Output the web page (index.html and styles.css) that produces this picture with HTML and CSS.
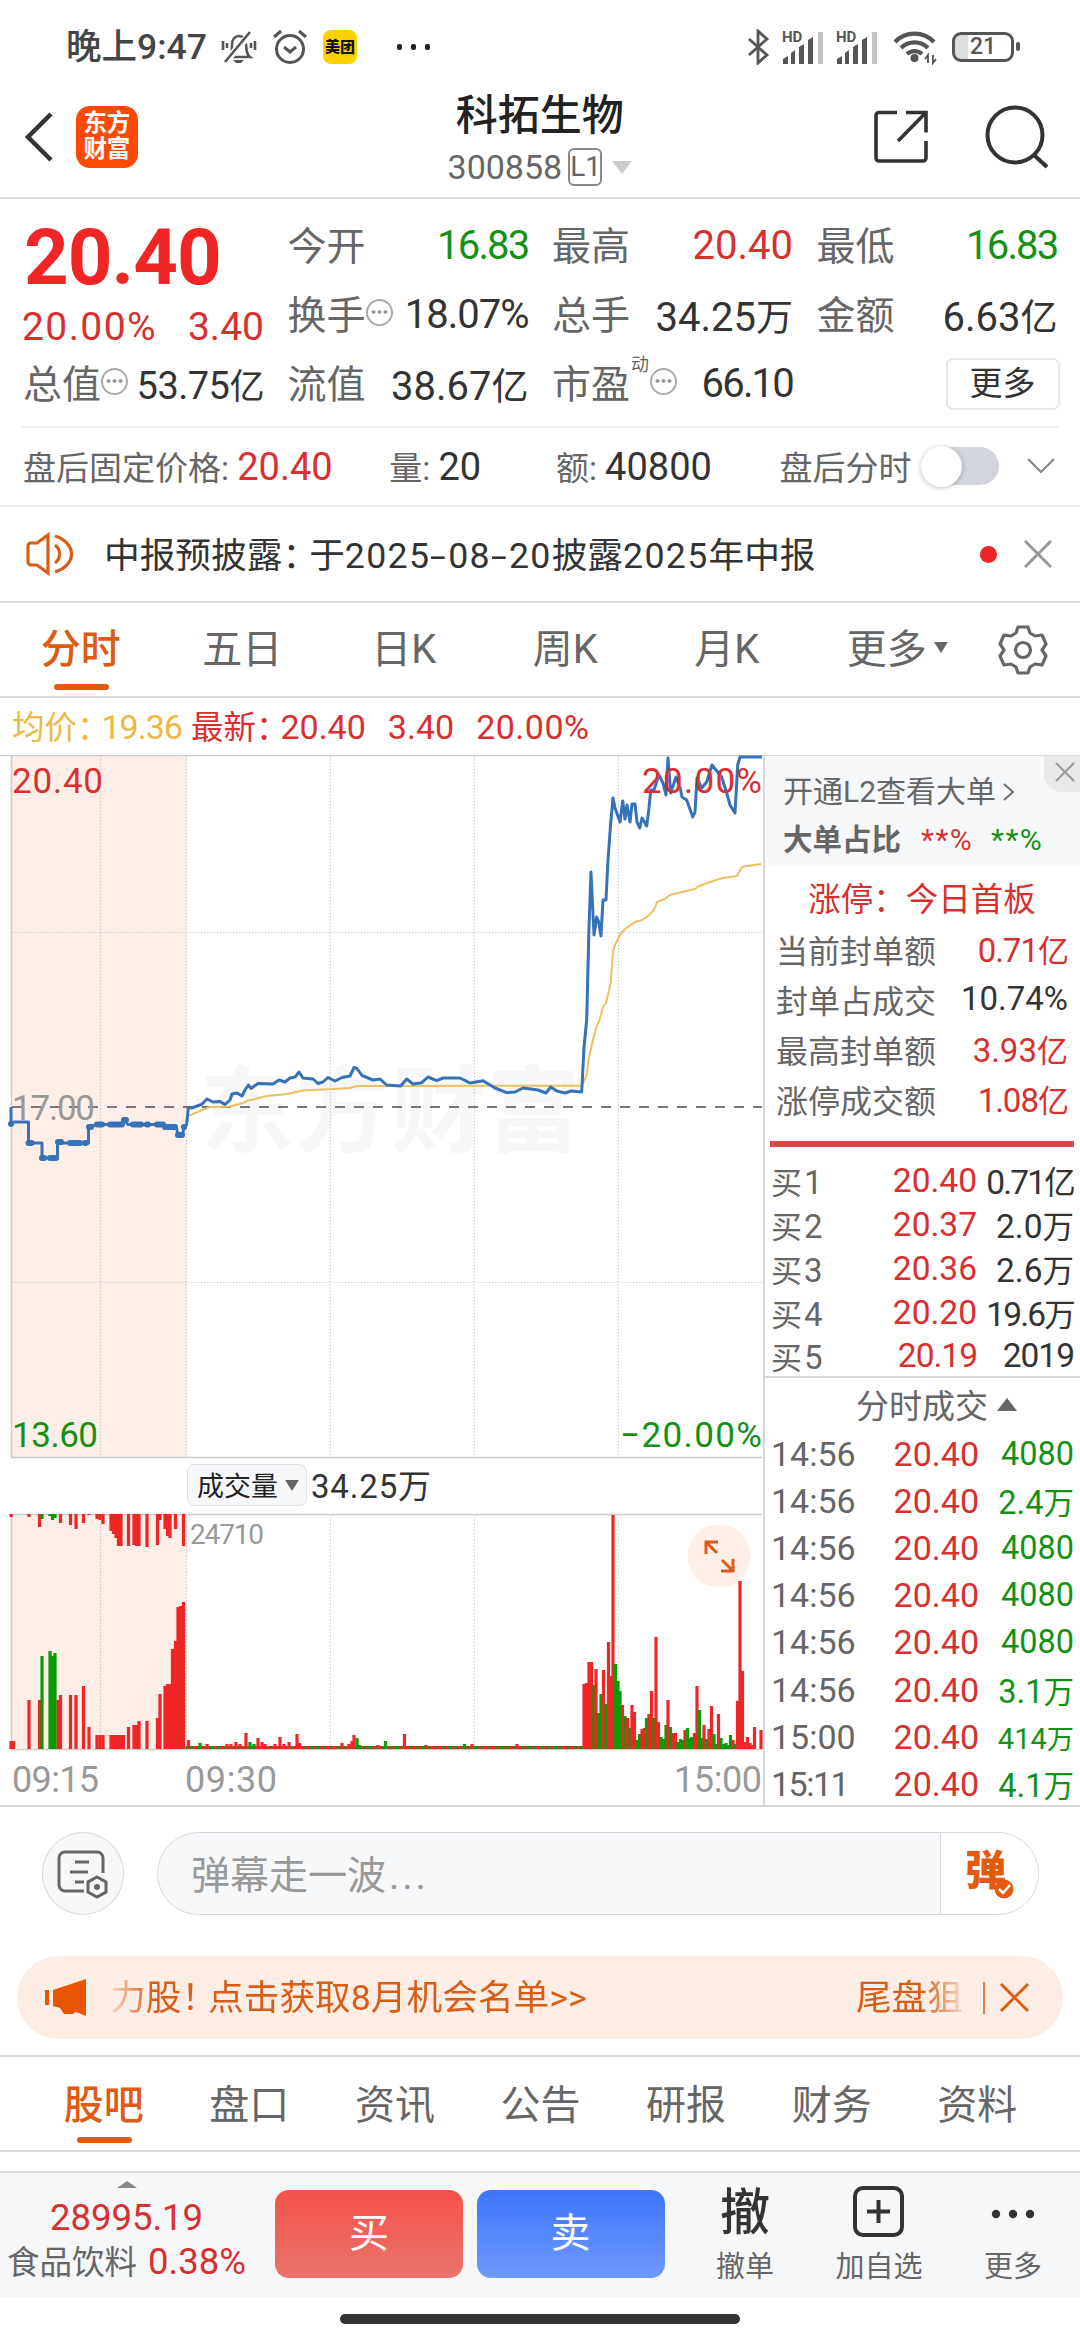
FILE: index.html
```html
<!DOCTYPE html>
<html lang="zh-CN">
<head>
    <meta charset="UTF-8">
    <meta name="viewport" content="width=device-width, initial-scale=1.0">
    <title>科拓生物 300858</title>
    <link rel="stylesheet" href="styles.css">
</head>
<body>
    <!-- Status bar -->
    <div class="status-bar">
        <span class="clock">晚上9:47</span>
        <svg class="bell" width="36" height="36" viewBox="0 0 36 36" fill="none" stroke="#555" stroke-width="2.6">
            <path d="M7 28h22c-4-3-3-6-4-12 0-6-3-9-7-9s-7 3-7 9c0 6 0 9-4 12z"/>
            <path d="M31 3L4 33" stroke="#fff" stroke-width="7"/>
            <path d="M29 3L4 33M2 12v9M34 12v9M6 14v5M30 14v5"/>
            <path d="M12 31h11l-3 3h-5z" fill="#555" stroke="none"/>
        </svg>
        <svg class="alarm" width="36" height="36" viewBox="0 0 36 36" fill="none" stroke="#555" stroke-width="3">
            <circle cx="18" cy="20" r="13.5"/>
            <path d="M12 18l6 5 6-5M2 8l7-6M34 8l-7-6"/>
        </svg>
        <span class="app-badge">美团</span>
        <span class="dots"><i></i><i></i><i></i></span>
        <div class="status-right">
            <svg width="24" height="36" viewBox="0 0 24 36" fill="none" stroke="#555" stroke-width="2.8">
                <path d="M3 10l18 16-9 8V2l9 8L3 26"/>
            </svg>
            <svg class="sim" width="42" height="36" viewBox="0 -2 42 36">
                <text x="0" y="11" class="hd">HD</text>
                <path d="M1 33v-5l5-3v8zM9 33V22l4-3v14zM17 33V16l5-3v20zM26 33V9l5-3v27z" fill="#555"/>
                <path d="M36 1h5v32h-5z" fill="#c4c4c4"/>
            </svg>
            <svg class="sim" width="42" height="36" viewBox="0 -2 42 36">
                <text x="0" y="11" class="hd">HD</text>
                <path d="M1 33v-5l5-3v8zM9 33V22l4-3v14zM17 33V16l5-3v20zM26 33V9l5-3v27z" fill="#555"/>
                <path d="M36 1h5v32h-5z" fill="#c4c4c4"/>
            </svg>
            <svg class="wifi" width="44" height="36" viewBox="0 0 44 36" fill="none" stroke="#555" stroke-width="4.2">
                <path d="M2 13a27 27 0 0 1 39 0M8 19a19 19 0 0 1 27 0M14 25a11 11 0 0 1 15 0"/>
                <circle cx="21.500" cy="29" r="4" fill="#555" stroke="none"/>
                <path d="M35 34v-8l-3 4M40 26v8l3-4" stroke-width="1.8"/>
            </svg>
            <span class="battery">21</span>
        </div>
    </div>

    <!-- Header -->
    <header class="header">
        <svg class="back" width="30" height="50" viewBox="0 0 30 50" fill="none" stroke="#333" stroke-width="4.500">
            <path d="M27 2L4 25l23 23"/>
        </svg>
        <div class="logo">东方<br>财富</div>
        <div class="title">
            <h1>科拓生物</h1>
            <div class="code">300858<span class="level">L1</span><i class="tri-down"></i></div>
        </div>
        <svg class="share" width="54" height="54" viewBox="0 0 54 54" fill="none" stroke="#333" stroke-width="3.600">
            <path d="M23 2.500H5a3 3 0 0 0-3 3V48a3 3 0 0 0 3 3h44a3 3 0 0 0 3-3V31M32 2.500h20v20M52 2.500L24 31"/>
        </svg>
        <svg class="search" width="64" height="64" viewBox="0 0 64 64" fill="none" stroke="#333" stroke-width="4">
            <circle cx="30" cy="30" r="27.500"/>
            <path d="M49 50l13 12"/>
        </svg>
    </header>

    <!-- Quote summary -->
    <section class="quote">
        <div class="quote-price">
            <div class="last">20.40</div>
            <div class="chg"><span class="wide">20.00%</span><span>3.40</span></div>
        </div>
        <div class="cell"><label>今开</label><b class="green tight">16.83</b></div>
        <div class="cell"><label>最高</label><b class="red">20.40</b></div>
        <div class="cell"><label>最低</label><b class="green tight">16.83</b></div>
        <div class="cell"><label>换手<i class="info"></i></label><b class="snug">18.07%</b></div>
        <div class="cell"><label>总手</label><b>34.25<em>万</em></b></div>
        <div class="cell"><label>金额</label><b>6.63<em>亿</em></b></div>
        <div class="cell small"><label>总值<i class="info"></i></label><b>53.75<em>亿</em></b></div>
        <div class="cell"><label>流值</label><b>38.67<em>亿</em></b></div>
        <div class="cell"><label>市盈<sup>动</sup><i class="info"></i></label><b class="tight">66.10</b></div>
        <div class="cell"><button class="more-btn">更多</button></div>
    </section>

    <!-- After-hours row -->
    <section class="after">
        <span class="a1">盘后固定价格: <b class="red">20.40</b></span>
        <span class="a2">量: <b>20</b></span>
        <span class="a3">额: <b>40800</b></span>
        <span class="a4">盘后分时</span>
        <span class="toggle"></span>
        <svg width="28" height="18" viewBox="0 0 28 18" fill="none" stroke="#888" stroke-width="2.200"><path d="M1 2l13 13L27 2"/></svg>
    </section>

    <!-- Notice -->
    <section class="notice">
        <svg width="50" height="44" viewBox="0 0 50 44" fill="none" stroke="#d95c17" stroke-width="3.200">
            <path d="M22 3v38L11 33H5a3 3 0 0 1-3-3V14a3 3 0 0 1 3-3h6zM29 13c6 4 6 14 0 18M29 4c22 7 22 29 0 36"/>
        </svg>
        <p>中报预披露<span class="colon">：</span>于<b>2025<i>-</i>08<i>-</i>20</b>披露<b>2025</b>年中报</p>
        <span class="red-dot"></span>
        <svg width="28" height="28" viewBox="0 0 28 28" stroke="#999" stroke-width="3"><path d="M1 1l26 26M27 1L1 27"/></svg>
    </section>

    <!-- Period tabs -->
    <nav class="periods">
        <a class="active">分时</a>
        <a>五日</a>
        <a>日K</a>
        <a>周K</a>
        <a>月K</a>
        <a class="more">更多<i></i></a>
        <svg width="50" height="50" viewBox="0 0 50 50" fill="none" stroke="#666" stroke-width="3.200" stroke-linejoin="round">
            <path d="M20 2h10l2 6 5 3 7-1 4 9-4 6 4 6-4 9-7-1-5 3-2 6H20l-2-6-5-3-7 1-4-9 4-6-4-6 4-9 7 1 5-3z"/>
            <circle cx="25" cy="25" r="7.500"/>
        </svg>
    </nav>

    <div class="legend">
        <span class="avg">均价：<b>19.36</b></span>
        <span class="red">最新：<b>20.40</b><b>3.40</b><b>20.00%</b></span>
    </div>

    <main class="board">
        <svg class="chart" id="chart" width="763" height="1051" viewBox="0 755 763 1051">
            <rect x="12" y="756" width="174.500" height="701" fill="#fdeee7"/>
            <rect x="12" y="1514" width="174.500" height="235" fill="#fdeee7"/>
            <text x="200" y="1145" class="watermark" textLength="380">东方财富</text>
            <g class="grid">
                <path d="M100.500 756V1457M186.500 756V1457M330.500 756V1457M474.500 756V1457M618.500 756V1457"/>
                <path d="M100.500 1514V1749M186.500 1514V1749M330.500 1514V1749M474.500 1514V1749M618.500 1514V1749"/>
                <path d="M12 932.500H762M12 1282.500H762"/>
            </g>
            <path class="frame" d="M0 755.500H763M11.500 755V1457.500H762M11.500 1749.500V1514.500M11 1514.500H762M11 1749.500H762"/>
            <path class="middle" d="M12 1107H762"/>
            <text x="12" y="793" class="label red" textLength="91">20.40</text>
            <text x="12" y="1120" class="label gray" textLength="83">17.00</text>
            <text x="12" y="1447" class="label green" textLength="86">13.60</text>
            <text x="620" y="1447" class="label green" textLength="142">−20.00%</text>
            <path class="avg-line" d="M189 1115.600L200 1111 210 1107 230 1106.500 243 1103 248 1100.600 267 1096 287 1094 303 1090.500 333 1089 350 1088 357 1086 380 1086 581.700 1085.700 586.700 1075 589 1057 593 1040 597 1025 599 1022 603 1007 606 1003 610.700 983 613 952 615 945 620 935 625 929 635 922 642 920 648 916 654 910 657 902 665 899 670 895 682 892 695 889 699 886 713 881 723 878 737 876 739 872 742 867 747 866 761 864"/>
            <path class="price-line pre" d="M11 1107V1124L14 1122H28.500V1143H42V1158H57.500V1142L60 1143H88.500V1127L97 1124.500H122L123.500 1119 128 1124.500H163L167 1127 176.500 1128 178 1135H182.500L184 1127 186.500 1125 188.500 1107"/>
            <path class="ticks" d="M11 1124h.1M28.500 1143h3M42 1158h2M50 1158h6M58 1142h3M70 1143h10M85 1143h1M89 1127h2M97 1124.500h5M110 1124.500h12M124 1120h2M133 1124.500h8M147 1124.500h1M157 1124.500h6M165 1127h10M178 1135h4M184 1127h.1"/>
            <path class="price-line" d="M188.500 1107L191.500 1108 201.500 1104.500 207 1099 213 1102 220 1101.500 225 1104.500 230 1100 232 1094 237 1093 242 1096 245 1090 248.500 1085 251 1088.500 258 1083.500 273 1084 279 1080 285 1082 290 1078 295 1077 299 1072 303 1078 313 1079 318 1083.500 323 1082 328 1077.500 335 1081 342 1077.500 350 1076 354 1067.500 357 1068.500 362 1075.500 373 1080 380 1079 386.700 1085 400.700 1086 406.700 1079 413 1084 421.700 1082.700 428 1077 436.700 1080.700 443 1078 460 1078 470 1083 483 1080.700 495 1088 506.700 1092.700 515 1092 523 1088 538 1090 546 1093 550.700 1087 556.700 1091 565 1093 571 1091 581.700 1092 584 1047 586.700 1020 589 927 591 872 594 935 596.700 917 598.700 922 601 936 603 900H606L608 860 610.700 823 613 798 615 808 620 822 622.700 801 625 819 627 805 630 822 632 804H635L637 822 639.700 828 642 818 646.700 826 649 808 650.700 790H654L659 775 663 783 666 795 668 758 670.700 793 676 777 680 787 682 797 686.700 800 692.700 817 695 812 697 778 701.700 788 706.700 782 712 765 716 770 721.700 777 726.700 793 730 805 735 813 737.700 765 740 757H762"/>
            <text x="642" y="793" class="label red" textLength="120">20.00%</text>

            <rect x="187.500" y="1464.500" width="119" height="41" rx="7" fill="#f7f8fa" stroke="#dfe1e4"/>
            <text x="197" y="1496" class="vol-name">成交量</text>
            <path d="M285 1480h14l-7 11z" fill="#666"/>
            <text x="311" y="1498" class="vol-value" textLength="120">34.25万</text>
            <g id="bars"></g>
            <text x="190" y="1544" class="vol-max" textLength="74">24710</text>
            <circle cx="719" cy="1556" r="31.500" fill="#fef0e8"/>
            <path d="M717 1553l-11-11m0 12v-12h12M722 1560l11 11m0-12v12h-12" fill="none" stroke="#dd5c14" stroke-width="3"/>
            <text x="12" y="1792" class="axis" textLength="87">09:15</text>
            <text x="185" y="1792" class="axis" textLength="92">09:30</text>
            <text x="674" y="1792" class="axis" textLength="88">15:00</text>
        </svg>

        <aside class="side">
            <div class="l2">
                <div>开通L2查看大单<svg width="12" height="18" viewBox="0 0 12 18" fill="none" stroke="#666" stroke-width="1.800"><path d="M1 1l9 8-9 8"/></svg></div>
                <div class="l2-rate"><strong>大单占比</strong><span class="red">**%</span><span class="green">**%</span></div>
                <span class="l2-close"><svg width="20" height="20" viewBox="0 0 20 20" stroke="#999" stroke-width="2"><path d="M1 1l18 18M19 1L1 19"/></svg></span>
            </div>
            <div class="limit">
                <h3>涨停：今日首板</h3>
                <div><span>当前封单额</span><b class="red snug">0.71<em>亿</em></b></div>
                <div><span>封单占成交</span><b>10.74%</b></div>
                <div><span>最高封单额</span><b class="red">3.93<em>亿</em></b></div>
                <div><span>涨停成交额</span><b class="red snug">1.08<em>亿</em></b></div>
            </div>
            <div class="ratio"></div>
            <div class="buys">
                <div><span>买<u>1</u></span><b class="red">20.40</b><b class="tight">0.71<em>亿</em></b></div>
                <div><span>买<u>2</u></span><b class="red">20.37</b><b>2.0<em>万</em></b></div>
                <div><span>买<u>3</u></span><b class="red">20.36</b><b>2.6<em>万</em></b></div>
                <div><span>买<u>4</u></span><b class="red">20.20</b><b class="tight">19.6<em>万</em></b></div>
                <div><span>买<u>5</u></span><b class="red snug">20.19</b><b class="snug">2019</b></div>
            </div>
            <div class="deals">
                <h4>分时成交<i></i></h4>
                <div><span>14:56</span><b class="red">20.40</b><b class="green">4080</b></div>
                <div><span>14:56</span><b class="red">20.40</b><b class="green">2.4<em>万</em></b></div>
                <div><span>14:56</span><b class="red">20.40</b><b class="green">4080</b></div>
                <div><span>14:56</span><b class="red">20.40</b><b class="green">4080</b></div>
                <div><span>14:56</span><b class="red">20.40</b><b class="green">4080</b></div>
                <div><span>14:56</span><b class="red">20.40</b><b class="green">3.1<em>万</em></b></div>
                <div><span>15:00</span><b class="red">20.40</b><b class="green tiny">414<em>万</em></b></div>
                <div><span class="narrow">15:11</span><b class="red">20.40</b><b class="green">4.1<em>万</em></b></div>
            </div>
        </aside>
    </main>

    <!-- Comment bar -->
    <section class="danmu">
        <div class="round">
            <svg width="52" height="50" viewBox="0 0 52 50" fill="none" stroke="#666" stroke-width="3">
                <path d="M27 41H8a6 6 0 0 1-6-6V8a6 6 0 0 1 6-6h32a6 6 0 0 1 6 6v15M18 12h14M13 22h18M18 32h9"/>
                <path d="M40 27l9 5v10l-9 5-9-5V32z"/>
                <circle cx="40" cy="37" r="3" fill="#666" stroke="none"/>
            </svg>
        </div>
        <div class="pill">
            <span>弹幕走一波<b>...</b></span>
            <div class="send">弹<svg width="20" height="20" viewBox="0 0 20 20"><circle cx="10" cy="10" r="9.500" fill="#e2590f"/><path d="M5 10l4 4 7-8" fill="none" stroke="#fff" stroke-width="2.500"/></svg></div>
        </div>
    </section>

    <!-- Promo ticker -->
    <section class="promo">
        <svg width="44" height="38" viewBox="0 0 44 38" fill="#ea5504">
            <path d="M1 11h4v15H1zM9 11L42 0v37l-10-4-1 0-2 2H20l-4-6-7-2z"/>
        </svg>
        <p class="ticker"><span>力股<i>！</i>点击获取8月机会名单&gt;&gt;</span><span>尾盘狙</span></p>
        <svg class="promo-close" width="46" height="34" viewBox="0 0 46 34" stroke="#dd5c14" fill="none"><path d="M1 1v32" stroke-width="1.500"/><path d="M18 3l27 27M45 3L18 30" stroke-width="3"/></svg>
    </section>

    <!-- Content tabs -->
    <nav class="sections">
        <a class="active">股吧</a>
        <a>盘口</a>
        <a>资讯</a>
        <a>公告</a>
        <a>研报</a>
        <a>财务</a>
        <a>资料</a>
    </nav>

    <!-- Trade bar -->
    <footer class="trade">
        <div class="sector">
            <i></i>
            <div class="index">28995.19</div>
            <div>食品饮料 <b>0.38%</b></div>
        </div>
        <button class="buy">买</button>
        <button class="sell">卖</button>
        <div class="action a-cancel"><strong>撤</strong>撤单</div>
        <div class="action a-add">
            <svg width="52" height="52" viewBox="0 0 52 52" fill="none" stroke="#333" stroke-width="4"><rect x="2" y="2" width="47" height="47" rx="8"/><path d="M25.500 14v23M14 25.500h23"/></svg>加自选
        </div>
        <div class="action a-more">
            <svg width="52" height="52" viewBox="0 0 52 52" fill="#333"><circle cx="9" cy="28" r="4.200"/><circle cx="26" cy="28" r="4.200"/><circle cx="43" cy="28" r="4.200"/></svg>更多
        </div>
    </footer>
    <div class="home"></div>

    <script>
        const RED = "#f02525";
        const GREEN = "#0a9b05";
        const BASE = 1749;
        const TOP = 1514;

        // [x, height] pairs of the opening auction
        const unmatched = {
            [RED]: [[11,3],[29,3],[39.5,13],[60.5,9],[70.5,11],[76,15],[83.5,9],[89,1],[97,5],[100,6],[103,10],[111,17],[113.5,20],[116,24],[118.5,32],[121,32],[128.5,32],[134,31],[136.5,32],[139,32],[147,33],[157.5,31],[160,6],[165,15],[167.5,22],[170,24],[175.5,15],[183.5,32]],
            [GREEN]: [[42,5],[50,2],[52.5,6],[55,4]]
        };
        const matched = {
            [RED]: [[11,8],[13.5,8],[29,49],[39.5,49],[58,49],[60.5,54],[70.5,54],[76,54],[83.5,63],[89,22],[97,14],[100,14],[103,14],[111,14],[113.5,14],[116,14],[118.5,14],[121,14],[123.5,14],[128.5,22],[134,24],[136.5,24],[139,28],[147,28],[157.5,31],[160,55],[165,63],[167.5,65],[170,65],[172.5,100],[175.5,108],[178,142],[180.5,143],[183.5,147]],
            [GREEN]: [[42,93],[50,98],[52.5,93],[55,96]]
        };

        // Regular session, r = up and g = down
        const session = "188.5r9 200g6 207r5 227r5 231r5 236r7 240r5 246r16 250g7 254g5 258r11 262r7 265r5 275r5 280r12 284r5 289r7 297r15 299.5r6 342r6 349r5 352r8 354r14 357g11 359.5g4 378r4 385.5g8 404.5r15 426r4 464.5g5 472r5 517r5 " +
            "584r65 586.5r66 589r87 591.5r87 594g64 596r80 598.5g36 601g55 603.5r79 606g45 608.5r107 610.5r73 613r234 615.5g85 618g68 620g58 622.5r44 625g33 627.5r31 630g21 632r44 634.5r37 637g9 639.5g15 642r20 644.5r21 646.5g31 649r35 651.5r58 654g31 656r112 658.5r27 661g12 663.5g10 666g24 668r49 670.5g22 673r16 675.5r16 678g7 680.5g10 683g9 685r19 687.5g21 690g11 692g12 694.5r16 697r63 699.5g39 702g11 704r24 706.5g10 709r20 711.5r43 714g15 716g5 718.5r35 721g11 723.5g5 726g6 728g4 730.5g14 733r9 735.5g5 737.5r48 740r168 742.5r78 745r7 747.5r12 750r6 752r4 754.5r22 761r19";

        const bars = document.getElementById("bars");

        function bar(x, y, h, color) {
            const rect = document.createElementNS("http://www.w3.org/2000/svg", "rect");
            rect.setAttribute("x", x - 1.6);
            rect.setAttribute("y", y);
            rect.setAttribute("width", 3.2);
            rect.setAttribute("height", h);
            rect.setAttribute("fill", color);
            bars.appendChild(rect);
        }

        for (const color of [RED, GREEN]) {
            unmatched[color].forEach(([x, h]) => bar(x, TOP, h, color));
            matched[color].forEach(([x, h]) => bar(x, BASE - h, h, color));
        }

        // Quiet minutes only leave a thin strip on the axis
        for (let i = 0, x = 187; x < 583; i++, x += 2.4) {
            bar(x, BASE - 3, 3, (i * 7) % 11 < 5 ? GREEN : RED);
        }

        session.split(" ").forEach(item => {
            const [, x, dir, h] = item.match(/^([\d.]+)([rg])(\d+)$/);
            bar(+x, BASE - h, +h, dir === "r" ? RED : GREEN);
        });
    </script>
</body>
</html>
```

FILE: styles.css
```css
* {
    box-sizing: border-box;
}

body {
    margin: 0;
    width: 1080px;
    height: 2340px;
    background: #fff;
    color: #333;
    font-family: Roboto, "Noto Sans CJK SC", sans-serif;
    display: flex;
    flex-direction: column;
    overflow: hidden;
}

b, i, em {
    font-weight: 400;
    font-style: normal;
}

u {
    text-decoration: none;
}

h1, h3, h4, p {
    margin: 0;
    font-weight: 400;
}

svg {
    display: block;
    flex: none;
}

button {
    font-family: inherit;
    padding: 0;
}

.red { color: #d8302f; }
.green { color: #149114; }

.tight { letter-spacing: -1.8px; }
.snug { letter-spacing: -1px; }

/* Status bar */
.status-bar {
    height: 76px;
    padding: 18px 60px 0 66px;
    display: flex;
    align-items: center;
}

.clock {
    width: 155px;
    font-size: 35.5px;
    font-weight: 500;
    line-height: 40px;
    color: #444;
    white-space: nowrap;
}

.alarm { margin-left: 15px; }

.app-badge {
    width: 34px;
    height: 34px;
    margin-left: 15px;
    border-radius: 8px;
    background: #fed100;
    color: #111;
    font-size: 15px;
    font-weight: 900;
    line-height: 34px;
    text-align: center;
}

.dots {
    margin-left: 40px;
    display: flex;
    gap: 9px;
}

.dots i {
    width: 5px;
    height: 6px;
    border-radius: 2px;
    background: #222;
}

.status-right {
    margin-left: auto;
    display: flex;
    align-items: center;
}

.sim {
    margin-left: 12px;
    overflow: visible;
}

.wifi { margin: 0 15px 0 15px; }

.hd {
    font-size: 15px;
    font-weight: 700;
    fill: #555;
}

.battery {
    position: relative;
    width: 62px;
    height: 30px;
    margin-right: 6px;
    border: 3.5px solid #555;
    border-radius: 9px;
    background: linear-gradient(90deg, #ddd 13px, #fff 13px);
    font-size: 23px;
    font-weight: 500;
    line-height: 24px;
    text-align: center;
    color: #555;
}

.battery::after {
    content: "";
    position: absolute;
    right: -9px;
    top: 7px;
    width: 4px;
    height: 9px;
    border-radius: 2px;
    background: #555;
}

/* Header */
.header {
    height: 123px;
    padding: 0 31px 0 24px;
    border-bottom: 2px solid #ddd;
    display: flex;
    align-items: center;
}

.logo {
    width: 62px;
    height: 62px;
    margin-left: 22px;
    border-radius: 14px;
    background: #fc4a05;
    color: #fff;
    font-size: 23.5px;
    font-weight: 700;
    line-height: 26px;
    padding-top: 4px;
    text-align: center;
}

.title {
    width: 739px;
    padding: 6px 0 0 68px;
    text-align: center;
}

.title h1 {
    font-size: 42px;
    font-weight: 500;
    line-height: 50px;
    padding-top: 5px;
    color: #222;
}

.code {
    height: 52px;
    display: flex;
    align-items: center;
    justify-content: center;
    font-size: 34px;
    color: #666;
}

.level {
    width: 34px;
    height: 38px;
    margin: 0 10px 0 6px;
    border: 2px solid #888;
    border-radius: 6px;
    font-size: 28px;
    line-height: 34px;
}

.tri-down {
    border: 10px solid transparent;
    border-top: 13px solid #ccc;
    border-bottom: 0;
}

.search { margin-left: 57px; }

/* Quote summary */
.quote {
    height: 229px;
    margin: 0 22px;
    padding: 12px 0 0 2px;
    border-bottom: 2px solid #eee;
    display: grid;
    grid-template-columns: repeat(4, 240px);
    grid-template-rows: repeat(3, 69px);
    column-gap: 24.5px;
}

.quote-price {
    grid-row: span 2;
}

.last {
    color: #f02525;
    font-size: 78px;
    font-weight: 700;
    line-height: 88px;
    letter-spacing: -1px;
    padding-top: 3px;
}

.chg {
    display: flex;
    justify-content: space-between;
    color: #d8302f;
    font-size: 39px;
    line-height: 50px;
}

.chg .wide {
    margin-left: -2px;
    letter-spacing: 1.4px;
}

.cell {
    display: flex;
    justify-content: space-between;
    align-items: center;
    white-space: nowrap;
}

.cell label {
    position: relative;
    display: flex;
    align-items: center;
    margin-top: -5px;
    margin-left: -1px;
    font-size: 39px;
    color: #666;
}

.cell b {
    font-size: 40px;
}

.cell b em {
    font-size: 37px;
}

.small b {
    font-size: 38px;
    letter-spacing: -.5px;
}

.small b em {
    font-size: 35px;
}

.info {
    width: 27px;
    height: 27px;
    border: 2px solid #aaa;
    border-radius: 50%;
    background: radial-gradient(circle, #999 1.7px, transparent 2px) 50% 50% / 6px 6px repeat-x;
    background-clip: content-box;
    padding: 0 2px;
}

.cell sup {
    align-self: flex-start;
    width: 20px;
    margin-top: 2px;
    font-size: 18px;
    line-height: 20px;
    padding-left: 1px;
}

.more-btn {
    width: 114px;
    height: 52px;
    margin-left: auto;
    margin-right: -2px;
    border: 2px solid #e6e6e6;
    border-radius: 7px;
    background: #fff;
    color: #333;
    font-size: 33px;
    line-height: 46px;
}

/* After-hours row */
.after {
    height: 79px;
    padding: 0 25px 2px 23px;
    border-bottom: 2px solid #eee;
    display: flex;
    align-items: center;
    font-size: 33px;
    color: #666;
    white-space: nowrap;
}

.after b {
    font-size: 38px;
}

.after b:not(.red) {
    color: #333;
}

.a1 { width: 367px; }
.a2 { width: 167px; }
.a3 { width: 224px; }
.a4 { width: 142px; }

.toggle {
    width: 78px;
    height: 38px;
    margin-right: 28px;
    border-radius: 19px;
    background: #d2d5db;
}

.toggle::before {
    content: "";
    display: block;
    width: 41px;
    height: 41px;
    margin-top: -1px;
    border-radius: 50%;
    background: #fff;
    box-shadow: 0 1px 5px rgba(0, 0, 0, .25);
}

/* Notice */
.notice {
    height: 96px;
    padding: 0 28px 0 26px;
    border-bottom: 2px solid #ddd;
    display: flex;
    align-items: center;
}

.notice p {
    margin-left: 28px;
    padding-bottom: 3px;
    font-size: 35.7px;
    white-space: nowrap;
}

.notice p b {
    letter-spacing: 1.3px;
}

.colon {
    margin-right: -9px;
}

.notice p i {
    display: inline-block;
    width: 18px;
    text-align: center;
    transform: scaleX(1.6);
}

.red-dot {
    width: 17px;
    height: 17px;
    margin-left: auto;
    margin-right: 27px;
    border-radius: 50%;
    background: #f02525;
}

/* Period tabs */
.periods {
    height: 95px;
    padding: 0 32px 0 0;
    border-bottom: 2px solid #ddd;
    display: flex;
    align-items: center;
}

.periods a {
    position: relative;
    width: 161.5px;
    text-align: center;
    font-size: 40px;
    line-height: 94px;
    color: #666;
}

.periods .more {
    padding-left: 18px;
    white-space: nowrap;
}

.periods a i {
    display: inline-block;
    margin: 0 0 10px 7px;
    border: 7px solid transparent;
    border-top: 11px solid #666;
    border-bottom: 0;
}

.periods svg {
    margin-left: auto;
}

.periods .active,
.sections .active {
    color: #de5b12;
    font-weight: 500;
}

.active::after {
    content: "";
    position: absolute;
    left: 50%;
    bottom: 7px;
    width: 55px;
    height: 6px;
    margin-left: -27px;
    border-radius: 3px;
    background: #e2590f;
}

.legend {
    height: 57px;
    padding: 2px 12px 0;
    display: flex;
    align-items: center;
    gap: 9px;
    font-size: 32.5px;
    line-height: 54px;
    white-space: nowrap;
}

.legend b {
    font-size: 34px;
    margin-left: -8px;
}

.legend b + b {
    margin-left: 22px;
}

.legend b:last-child {
    letter-spacing: .5px;
}

.legend .avg b {
    letter-spacing: -1px;
}

.avg { color: #edb844; }

/* Chart */
.board {
    height: 1052px;
    border-bottom: 2px solid #d5d8dc;
    display: flex;
}

.chart text {
    font-family: Roboto, "Noto Sans CJK SC", sans-serif;
}

.grid path {
    stroke: #c4c4c4;
    stroke-width: 1.2;
    stroke-dasharray: 1.2 2;
}

.frame {
    fill: none;
    stroke: #ccc;
    stroke-width: 1.5;
}

.middle {
    stroke: #777;
    stroke-width: 1.8;
    stroke-dasharray: 10 9;
}

.watermark {
    font-size: 94px;
    font-weight: 700;
    fill: #f7f7f7;
}

.price-line {
    fill: none;
    stroke: #3672b8;
    stroke-width: 3;
    stroke-linejoin: round;
}

.ticks {
    stroke: #3672b8;
    stroke-width: 6;
    stroke-linecap: round;
}

.avg-line {
    fill: none;
    stroke: #ebc061;
    stroke-width: 2;
    stroke-linejoin: round;
}

.label { font-size: 35px; }
.label.red { fill: #d8302f; }
.label.green { fill: #149114; }
.label.gray { fill: #999; }

.vol-name {
    font-size: 27px;
    fill: #222;
}

.vol-value {
    font-size: 33px;
    fill: #333;
}

.vol-max {
    font-size: 28px;
    fill: #999;
}

.axis {
    font-size: 36px;
    fill: #999;
}

/* Side panel */
.side {
    width: 317px;
    border-left: 2px solid #d5d8dc;
    border-top: 1px solid #ddd;
}

.side em {
    font-size: .94em;
}

.l2 {
    position: relative;
    height: 110px;
    padding: 12px 0 0 18px;
    background: #f7f8fa;
    color: #666;
    font-size: 30px;
    line-height: 48px;
}

.l2 > div {
    display: flex;
    align-items: center;
    white-space: nowrap;
}

.l2 > div svg {
    margin-left: 7px;
}

.l2-rate strong {
    font-size: 29.5px;
    width: 138px;
}

.l2-rate span {
    width: 70px;
    font-size: 30px;
    letter-spacing: 1.5px;
}

.l2-close {
    position: absolute;
    top: 0;
    right: 0;
    width: 36px;
    height: 36px;
    padding: 6px 0 0 11px;
    border-bottom-left-radius: 18px;
    background: #e8e9eb;
}

.limit {
    padding: 9px 12px 0 11px;
    height: 275px;
    font-size: 32px;
}

.limit h3 {
    font-size: 32.5px;
    line-height: 50px;
    text-align: center;
    color: #d8302f;
    white-space: nowrap;
}

.limit div {
    height: 50px;
    padding-bottom: 3px;
    display: flex;
    justify-content: space-between;
    align-items: center;
    white-space: nowrap;
}

.limit span {
    color: #666;
}

.limit b {
    font-size: 33px;
}

.ratio {
    height: 6px;
    margin: 0 6px 0 5px;
    background: #d9494a;
}

.buys {
    height: 231px;
    padding: 10px 6px 0 6px;
    border-bottom: 2px solid #d5d8dc;
}

.buys div,
.deals div {
    height: 44px;
    display: grid;
    grid-template-columns: 90px 116px 1fr;
    align-items: center;
    font-size: 33.5px;
    white-space: nowrap;
}

.buys span,
.deals span {
    color: #666;
}

.buys span {
    font-size: 31px;
}

.buys u {
    font-size: 33px;
    margin-left: 2px;
}

.buys b,
.deals b {
    text-align: right;
}

.deals {
    padding: 0 6px 0 6px;
}

.deals h4 {
    height: 52px;
    display: flex;
    align-items: center;
    justify-content: center;
    font-size: 33px;
    color: #666;
    padding-left: 28px;
}

.deals h4 i {
    margin-left: 9px;
    border: 10px solid transparent;
    border-bottom: 13px solid #666;
    border-top: 0;
}

.deals div {
    height: 47.2px;
    grid-template-columns: 90px 118px 1fr;
    font-size: 34px;
}

.deals .green {
    font-size: 32.5px;
}

.deals .green.tiny {
    font-size: 29px;
}

.deals .narrow {
    letter-spacing: -1.5px;
}

/* Comment bar */
.danmu {
    height: 132px;
    padding: 0 41px 0 42px;
    display: flex;
    align-items: center;
}

.round {
    width: 82px;
    height: 83px;
    border: 1.5px solid #d5d7db;
    border-radius: 50%;
    background: #f7f8fa;
    display: flex;
    align-items: center;
    justify-content: center;
    padding-top: 4px;
}

.pill {
    flex: 1;
    height: 83px;
    margin-left: 33px;
    border: 1.5px solid #d5d7db;
    border-radius: 42px;
    background: #f7f8fa;
    display: flex;
    align-items: center;
    overflow: hidden;
}

.pill span {
    flex: 1;
    padding: 0 0 2px 33px;
    font-size: 39px;
    color: #999;
}

.pill b {
    margin-left: 3px;
    letter-spacing: 3px;
}

.send {
    position: relative;
    width: 98px;
    height: 100%;
    padding-left: 24px;
    border-left: 1.5px solid #d5d7db;
    background: #fff;
    color: #e2590f;
    font-size: 41px;
    font-weight: 900;
    line-height: 76px;
}

.send svg {
    position: absolute;
    left: 53px;
    top: 46px;
    border-radius: 50%;
}

/* Promo ticker */
.promo {
    height: 83px;
    margin: 17px 17px 16px 17px;
    padding: 0 34px 0 27px;
    border-radius: 42px;
    background: #fceee5;
    display: flex;
    align-items: center;
}

.ticker {
    flex: 1;
    margin: 0 12px 0 15px;
    padding: 0 8px 0 7px;
    display: flex;
    justify-content: space-between;
    font-size: 35.7px;
    line-height: 50px;
    color: #d95c17;
    white-space: nowrap;
    -webkit-mask-image: linear-gradient(90deg, transparent, #000 50px, #000 calc(100% - 50px), transparent);
    mask-image: linear-gradient(90deg, transparent, #000 50px, #000 calc(100% - 50px), transparent);
}

.ticker i {
    margin-right: -9px;
}

/* Content tabs */
.sections {
    height: 97px;
    padding: 0 30px 0 31px;
    border-top: 2px solid #ddd;
    border-bottom: 2px solid #ddd;
    display: flex;
}

.sections a {
    position: relative;
    flex: 1;
    text-align: center;
    font-size: 40px;
    line-height: 97px;
    color: #666;
}

.sections .active::after {
    bottom: 7px;
}

/* Trade bar */
.trade {
    height: 126px;
    margin-top: 19px;
    border-top: 2px solid #ddd;
    background: #f6f7f9;
    display: flex;
}

.sector {
    width: 275px;
    padding: 8px 24px 0 2px;
    display: flex;
    flex-direction: column;
    align-items: center;
    color: #666;
    font-size: 32.5px;
    line-height: 44px;
    white-space: nowrap;
}

.sector i {
    border: 10px solid transparent;
    border-bottom: 7px solid #888;
    border-top: 0;
}

.sector b,
.index {
    color: #d8302f;
    font-size: 36.500px;
}

.sector b {
    margin-left: 3px;
}

.index {
    padding-top: 8px;
}

.trade button {
    width: 188px;
    height: 88px;
    margin: 17px 13.5px 0 0;
    border: 0;
    border-radius: 14px;
    color: #fff;
    font-size: 40px;
    line-height: 88px;
}

.buy { background: linear-gradient(#f4514a, #ea746e); }
.sell { background: linear-gradient(#3c76fa, #7099fd); }

.action {
    width: 134px;
    padding-top: 13px;
    display: flex;
    flex-direction: column;
    align-items: center;
    font-size: 29px;
    line-height: 58px;
    color: #666;
}

.action strong {
    height: 52px;
    font-size: 50px;
    font-weight: 500;
    line-height: 54px;
    color: #333;
}

.home {
    width: 400px;
    height: 10px;
    margin: 17px auto 0;
    border-radius: 5px;
    background: #333;
}
```
